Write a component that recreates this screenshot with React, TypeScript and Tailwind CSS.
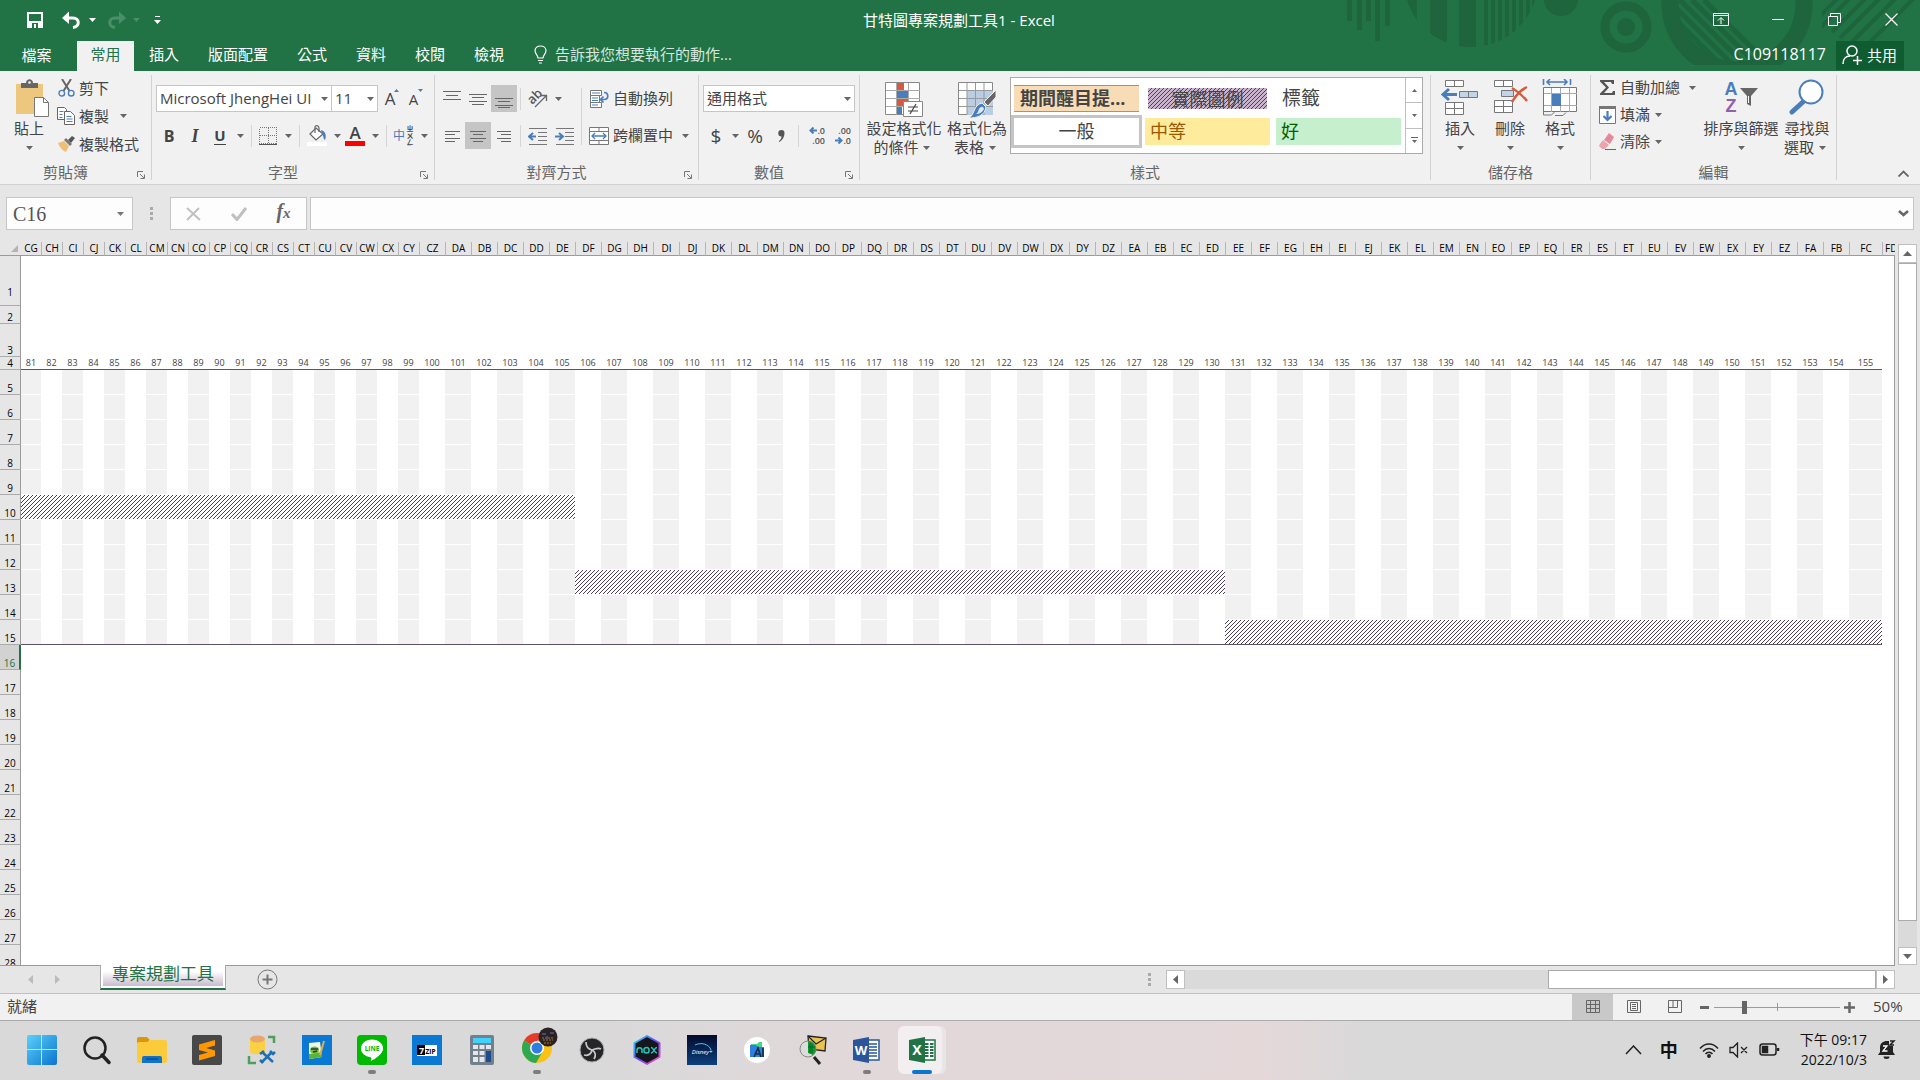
import React from "react";
import type { ReactNode } from "react";

const BLUE = "#4a7ebb";

/* ---------- helpers ---------- */

function Caret({ w = "w-3", color = "#666" }: { w?: string; color?: string }) {
  return (
    <span className={`${w} flex shrink-0 items-center justify-center`}>
      <svg width="7" height="4" viewBox="0 0 7 4">
        <path d="M0 0h7L3.500 4z" fill={color} />
      </svg>
    </span>
  );
}

function Sep({ cls = "mx-[3px] h-[22px]" }: { cls?: string }) {
  return <span className={`${cls} w-px shrink-0 bg-[#d5d5d5]`} />;
}

function IconButton({ label, w, active, children }: { label: string; w: string; active?: boolean; children: ReactNode }) {
  return (
    <button
      aria-label={label}
      className={`${w} flex h-[27px] shrink-0 items-center justify-center ${active ? "bg-[#c5c5c5]" : ""}`}
    >
      {children}
    </button>
  );
}

function BigButton({ w, icon, line1, line2 }: { w: string; icon: ReactNode; line1: string; line2?: string }) {
  return (
    <button className={`${w} flex shrink-0 flex-col items-center pt-2 whitespace-nowrap`}>
      <span className="flex h-10 items-start justify-center">{icon}</span>
      <span className="h-[19px] leading-[19px]">{line1}</span>
      <span className="flex h-[19px] items-center leading-[19px]">
        {line2}
        <Caret w={line2 ? "w-4" : "w-3"} />
      </span>
    </button>
  );
}

function SmallButton({ h, icon, text, caret }: { h: string; icon: ReactNode; text: string; caret?: string }) {
  return (
    <button className={`${h} flex items-center whitespace-nowrap`}>
      <span className="mr-1 flex w-[18px] justify-center">{icon}</span>
      {text}
      {caret && <Caret w={caret} />}
    </button>
  );
}

function Group({ w, label, launcher, children }: { w: string; label: string; launcher?: boolean; children: ReactNode }) {
  return (
    <>
      <section aria-label={label} className={`${w} flex shrink-0 flex-col`}>
        <div className="flex h-[91px]">{children}</div>
        <div className="flex h-[22px] items-center text-[#666]">
          <span className="flex-1 pb-[2px] text-center leading-5">{label}</span>
          {launcher && (
            <button aria-label={`${label}設定`} className="flex w-5 justify-center pt-1">
              <svg width="8" height="8" viewBox="0 0 8 8" fill="none" stroke="#777">
                <path d="M.5 6V.5H6M3 3l4 4M7.500 3.500v4h-4" />
              </svg>
            </button>
          )}
        </div>
      </section>
      <span className="my-1 w-px shrink-0 bg-[#d2d2d2]" />
    </>
  );
}

function Combo({ label, w, value }: { label: string; w: string; value: string }) {
  return (
    <div className={`${w} relative h-[27px] shrink-0`}>
      <select
        aria-label={label}
        defaultValue={value}
        className="h-full w-full appearance-none border border-[#c6c6c6] bg-white pl-[3px] text-[15px] text-[#444]"
      >
        <option>{value}</option>
      </select>
      <span className="pointer-events-none absolute inset-y-0 right-0 flex">
        <Caret w="w-4" />
      </span>
    </div>
  );
}

/* ---------- ribbon icons ---------- */

function LinesIcon({ rows, h = 18 }: { rows: [number, number, number][]; h?: number }) {
  return (
    <svg width="18" height={h} viewBox={`0 0 18 ${h}`} fill="#666" shapeRendering="crispEdges">
      {rows.map(([x, y, w]) => (
        <rect key={y} x={x} y={y} width={w} height="1" />
      ))}
    </svg>
  );
}

const PasteIcon = (
  <svg width="36" height="38" viewBox="0 0 36 38">
    <path d="M2 5h27v30H2z" fill="#eec77f" />
    <path d="M7 9V4h5c0-5 7-5 7 0h5v5z" fill="#666" />
    <circle cx="15.500" cy="3.500" r="1.300" fill="#f1f1f1" />
    <path d="M20.500 18.500h9l5 5v14h-14z" fill="#fff" stroke="#777" />
    <path d="M29.500 18.500v5h5" fill="none" stroke="#777" />
  </svg>
);

const CutIcon = (
  <svg width="17" height="18" viewBox="0 0 17 18" fill="none">
    <path d="M4 0l7.500 12M13 0L5.500 12" stroke="#666" strokeWidth="2" />
    <circle cx="3.800" cy="14.200" r="2.800" stroke={BLUE} strokeWidth="1.400" />
    <circle cx="13.200" cy="14.200" r="2.800" stroke={BLUE} strokeWidth="1.400" />
  </svg>
);

const CopyIcon = (
  <svg width="18" height="18" viewBox="0 0 18 18" fill="#fff" stroke="#666">
    <path d="M.5.5h7l2 2v10h-9z" />
    <path d="M7.500 4.500h6l4 4v9h-10z" />
    <path d="M2.500 4.500h4M2.500 7.500h3M2.500 10.500h3M9.500 9.500h5M9.500 12h6M9.500 14.500h6" stroke={BLUE} />
  </svg>
);

const PainterIcon = (
  <svg width="18" height="16" viewBox="0 0 18 16">
    <path d="M1 7l6-2 5 5-3 6c-3-1-6-4-8-9z" fill="#eec077" />
    <path d="M7 4l2-2 6 6-2 2z" fill="#777" />
    <path d="M11 4l4-4 3 2-4 5z" fill="#555" />
  </svg>
);

const BorderIcon = (
  <svg width="18" height="18" viewBox="0 0 18 18" fill="none" stroke="#777" shapeRendering="crispEdges">
    <path d="M.5.5h17v16H.5zM9 1v15M1 8.500h16" strokeDasharray="1 1" />
    <path d="M0 17.500h18" stroke="#555" />
  </svg>
);

const BucketIcon = (
  <svg width="20" height="21" viewBox="0 0 20 21">
    <path d="M3 9l6-6 7 6-7 6z" fill="#fff" stroke="#666" strokeWidth="1.200" />
    <path d="M8 8V2c0-2 4-2 4 1v4" fill="none" stroke="#666" strokeWidth="1.200" />
    <path d="M14 5c4 1 6 5 4 10-2-1-1-4-3-6z" fill={BLUE} />
    <path d="M0 17h20v4H0z" fill="#fff" />
  </svg>
);

const OrientationIcon = (
  <svg width="20" height="20" viewBox="0 0 20 20">
    <text x="0" y="12" fontSize="13" fontWeight="600" fill="#555" transform="rotate(-45 7 9)">
      ab
    </text>
    <path d="M7 18L18 7M13 6.500h5.500V12" fill="none" stroke="#666" strokeWidth="1.300" />
  </svg>
);

function IndentIcon({ right }: { right?: boolean }) {
  return (
    <svg width="20" height="18" viewBox="0 0 20 18">
      <path d="M1 1.500h18M10 5.500h9M10 9.500h9M10 13.500h9M1 17.500h18" stroke="#777" />
      <path
        d={right ? "M0 9.500h7M4 6l4 3.500L4 13" : "M1 9.500h7M5 6L1 9.500 5 13"}
        stroke={BLUE}
        strokeWidth="2"
        fill="none"
      />
    </svg>
  );
}

const WrapIcon = (
  <svg width="20" height="20" viewBox="0 0 20 20" fill="none">
    <path d="M1.500 1.500h11v5h-11zM1.500 6.500h9v7h-9zM1.500 13.500h11v5h-11z" fill="#fff" stroke="#777" />
    <path d="M3 4h8M3 9h6M3 11.500h6M3 16h6" stroke={BLUE} />
    <path d="M15 3.500c5 0 5 7 0 7h-3M14.500 7.500l-3 3 3 3" stroke={BLUE} strokeWidth="1.700" />
  </svg>
);

const MergeIcon = (
  <svg width="20" height="20" viewBox="0 0 20 20" fill="none">
    <path d="M.5 1.500h19v17H.5zM.5 5.500h19M.5 14.500h19M10 1.500v4M10 14.500v4" fill="#fff" stroke="#777" />
    <path d="M3 10h14M6 7l-3 3 3 3M14 7l3 3-3 3" stroke={BLUE} strokeWidth="1.300" />
  </svg>
);

function DecimalIcon({ less }: { less?: boolean }) {
  const arrow = (
    <svg width="8" height="7" viewBox="0 0 8 7" fill="none" stroke={BLUE} strokeWidth="2">
      <path d={less ? "M0 3.500h6M3.500.5l3 3-3 3" : "M8 3.500H2M4.500.5l-3 3 3 3"} />
    </svg>
  );
  return (
    <span className="flex w-[18px] flex-col text-[9px] leading-[10px] font-semibold text-[#555]">
      <span className="flex items-center justify-end">
        {!less && arrow}
        {less ? ".00" : ".0"}
      </span>
      <span className="flex items-center justify-end">
        {less && arrow}
        {less ? ".0" : ".00"}
      </span>
    </span>
  );
}

const ConditionalIcon = (
  <svg width="38" height="40" viewBox="0 0 38 40">
    <path d="M.5 3.500h34v32H.5z" fill="#fff" stroke="#888" />
    <path d="M11.500 4v32M23.500 4v32M1 11.500h34M1 19.500h34M1 27.500h34" stroke="#aaa" />
    <path d="M12 4h7v7h-7z M12 20h11v7H12z" fill="#d65b3d" />
    <path d="M12 12h11v7H12z M12 28h5v7h-5z" fill={BLUE} />
    <path d="M18.500 22.500h19v15h-19z" fill="#fff" stroke="#888" />
    <path d="M23 28h10M23 32h10M31 25l-6 10" stroke="#444" strokeWidth="1.200" />
  </svg>
);

const TableStyleIcon = (
  <svg width="38" height="40" viewBox="0 0 38 40">
    <path d="M.5 3.500h34v32H.5z" fill="#fff" stroke="#888" />
    <path d="M9 11h26v25H9z" fill="#b9cde5" />
    <path d="M9 4v32M17.500 4v32M26 4v32M1 11.500h34M1 19.500h34M1 27.500h34" stroke="#999" />
    <path d="M38 11v7l-8 9-4-4z" fill="#666" stroke="#f1f1f1" />
    <path d="M24 24l4 4c-1 9-10 11-17 11 6-3 4-13 13-15z" fill={BLUE} stroke="#f1f1f1" />
    <path d="M21 30c2-3 4-3 5 0-2 4-5 5-8 5 2-1 2-3 3-5z" fill="#dfe9f5" />
  </svg>
);

const InsertIcon = (
  <svg width="38" height="37" viewBox="0 0 38 37" fill="#fff" stroke="#777">
    <path d="M4.500 1.500h18v6h-18zM13.500 1.500v6M4.500 23.500h18v12h-18zM13.500 23.500v12M4.500 29.500h18" />
    <path d="M18.500 12.500h18v6h-18zM27.500 12.500v6" fill="#c3d3e8" />
    <path d="M2 15.500h14M8 10l-6 5.500L8 21" fill="none" stroke={BLUE} strokeWidth="3" />
  </svg>
);

const DeleteIcon = (
  <svg width="38" height="37" viewBox="0 0 38 37" fill="#fff" stroke="#777">
    <path d="M3.500 1.500h18v6h-18zM12.500 1.500v6M3.500 21.500h18v12h-18zM12.500 21.500v12M3.500 27.500h18" />
    <path d="M10.500 11.500h12v6h-12z" fill="#c3d3e8" />
    <path d="M21 9c5 3 11 8 15 13M36 8c-6 3-11 8-15 15" fill="none" stroke="#d65b3d" strokeWidth="2.500" />
  </svg>
);

const FormatIcon = (
  <svg width="36" height="38" viewBox="0 0 36 38" fill="none">
    <path d="M1.500 0v6M28.500 0v6M5 3h20M8 0L5 3l3 3M22 0l3 3-3 3" stroke={BLUE} strokeWidth="1.600" />
    <path d="M1.500 8.500h33v24h-33z" fill="#fff" stroke="#777" />
    <path d="M9.500 9v24M18.500 9v24M27.500 9v24M2 14.500h33M2 26.500h33" stroke="#aaa" />
    <path d="M10 15h9v12h-9z" fill={BLUE} />
    <path d="M1.500 32v4h8l3-3M13 36.500h8l3-3" stroke="#777" />
  </svg>
);

const SumIcon = (
  <svg width="17" height="17" viewBox="0 0 17 17">
    <path d="M1 1h14v4h-2l-1-2H5l5 5.500L5 14h8l1-2h2v4H1v-1.500L7 8.500 1 2.500z" fill="#555" />
  </svg>
);

const FillIcon = (
  <svg width="17" height="18" viewBox="0 0 17 18">
    <path d="M.5.500h16v17H.5z" fill="#fff" stroke="#777" />
    <path d="M0 0h17v3H0z" fill="#777" />
    <path d="M8.500 5v9M4.500 10l4 4 4-4" stroke={BLUE} strokeWidth="2.200" fill="none" />
  </svg>
);

const EraserIcon = (
  <svg width="18" height="17" viewBox="0 0 18 17">
    <path d="M11 0l5 4-4 7-6-4z" fill="#e58a9a" />
    <path d="M5 7l6 5-4 4H4l-3-3c0-1 2-4 4-6z" fill="#eba3af" />
    <path d="M7 16.500h11" stroke="#666" />
  </svg>
);

const SortIcon = (
  <span className="flex w-9 font-['Liberation_Sans'] text-[18px] leading-[17px] font-bold">
    <span className="flex w-4 flex-col items-center pt-[2px]">
      <span className="text-[#4a7ebb]">A</span>
      <span className="text-[#9160ad]">Z</span>
    </span>
    <svg width="20" height="37" viewBox="0 0 20 37">
      <path d="M1 9h18l-7 8v10l-4-2v-8z" fill="#666" />
      <path d="M9.500 17v7" stroke="#fff" />
    </svg>
  </span>
);

const FindIcon = (
  <svg width="36" height="37" viewBox="0 0 36 37">
    <path d="M3 33l12-11" stroke={BLUE} strokeWidth="5" strokeLinecap="round" />
    <circle cx="22" cy="13" r="11.500" fill="#fff" stroke={BLUE} strokeWidth="2" />
  </svg>
);

/* ---------- title bar ---------- */

function TitleArt() {
  const thin = [1484, 1491, 1498, 1505, 1512, 1519, 1526, 1532];
  return (
    <svg className="pointer-events-none absolute top-0 right-0" width="620" height="71" viewBox="1300 0 620 71" fill="#1e643c">
      <defs>
        <clipPath id="disc">
          <circle cx="1471" cy="-20" r="67" />
        </clipPath>
        <clipPath id="bowl">
          <circle cx="1737" cy="3" r="60" />
        </clipPath>
        <clipPath id="band">
          <rect x="1650" y="0" width="170" height="65" />
        </clipPath>
        <clipPath id="corner">
          <rect x="1822" y="0" width="98" height="56" />
        </clipPath>
      </defs>
      <path d="M1347 0h5v21h-5zM1357 0h5v30h-5zM1366 0h5v21h-5zM1375 0h5v41h-5zM1385 0h5v26h-5z" />
      <g clipPath="url(#disc)">
        <path d="M1404 0h13v50h-13zM1430 0h17v50h-17zM1459 0h17v50h-17z" />
        {thin.map((x) => (
          <rect key={x} x={x} y="0" width="4" height="50" />
        ))}
      </g>
      <circle cx="1561" cy="-1" r="17" />
      <circle cx="1626" cy="27" r="9" />
      <circle cx="1626" cy="27" r="21" fill="none" stroke="#1e643c" strokeWidth="9" />
      <g clipPath="url(#band)">
        <circle cx="1737" cy="3" r="67" fill="none" stroke="#1e643c" strokeWidth="17" />
      </g>
      <g clipPath="url(#bowl)" stroke="#1e643c" strokeWidth="5">
        <path d="M1668 0l80 80M1680 0l80 80M1692 0l80 80M1704 0l80 80M1660 4l80 80" />
      </g>
      <g clipPath="url(#corner)" stroke="#1e643c" strokeWidth="4">
        <path d="M1842-6l-24 24M1856-8l-38 38M1872-8l-40 40M1886-8l-46 46M1904-10l-66 66M1922-10l-70 70" />
      </g>
    </svg>
  );
}

function TitleBar() {
  return (
    <div className="relative z-10 flex h-[41px] items-center pb-[2px] text-white">
      <div className="flex flex-1 items-center pl-[26px]">
        <button aria-label="儲存">
          <svg width="18" height="18" viewBox="0 0 18 18">
            <path d="M2 2h14v14H2z" fill="none" stroke="#fff" strokeWidth="2" />
            <path d="M3 10h12v6H3z" fill="#fff" />
            <path d="M6 12h6v5H6z" fill="#217346" />
            <path d="M8 13h2v4H8z" fill="#fff" />
          </svg>
        </button>
        <button aria-label="復原" className="ml-[18px] flex items-center">
          <svg width="20" height="18" viewBox="0 0 20 18">
            <path d="M3 7h8c7 0 7 9 0 9.500" fill="none" stroke="#fff" strokeWidth="3" />
            <path d="M0 7l7-6.500V13z" fill="#fff" />
          </svg>
          <Caret w="w-5" color="#fff" />
        </button>
        <button aria-label="取消復原" className="ml-1 flex items-center">
          <svg width="20" height="18" viewBox="0 0 20 18">
            <path d="M17 7H9c-7 0-7 9 0 9.500" fill="none" stroke="#4a8f6a" strokeWidth="3" />
            <path d="M20 7l-7-6.500V13z" fill="#4a8f6a" />
          </svg>
          <Caret w="w-5" color="#4a8f6a" />
        </button>
        <button aria-label="自訂快速存取工具列" className="ml-2">
          <svg width="7" height="8" viewBox="0 0 7 8" fill="#fff">
            <path d="M1 0h5v1H1zM0 4h7L3.500 8z" />
          </svg>
        </button>
      </div>
      <h1 className="mr-7 text-[15px] leading-5 text-white">甘特圖專案規劃工具1 - Excel</h1>
      <div className="flex h-full flex-1 justify-end">
        <button aria-label="功能區顯示選項" className="flex w-[57px] items-center justify-center">
          <svg width="16" height="13" viewBox="0 0 16 13" fill="none" stroke="#fff">
            <path d="M.5.5h15v12H.5zM.5 2.500h15M8 11V5M5 7.500L8 4.500l3 3" />
          </svg>
        </button>
        <button aria-label="最小化" className="flex w-[57px] items-center justify-center">
          <svg width="12" height="2" viewBox="0 0 12 2">
            <path d="M0 0h12v1H0z" fill="#fff" />
          </svg>
        </button>
        <button aria-label="還原" className="flex w-[57px] items-center justify-center">
          <svg width="13" height="13" viewBox="0 0 13 13" fill="none" stroke="#fff">
            <path d="M.5 3.500h9v9h-9zM2.500 3.500v-3h10v9h-3" />
          </svg>
        </button>
        <button aria-label="關閉" className="flex w-[57px] items-center justify-center">
          <svg width="13" height="13" viewBox="0 0 13 13" fill="none" stroke="#fff" strokeWidth="1.200">
            <path d="M.5.5l12 12M12.500.5l-12 12" />
          </svg>
        </button>
      </div>
    </div>
  );
}

function Tabs() {
  const tabs = ["插入", "版面配置", "公式", "資料", "校閱", "檢視"];
  return (
    <nav className="relative z-10 flex h-[30px] text-[15px] leading-6 text-white">
      <button className="w-[77px] pr-1 pb-[2px] text-center">檔案</button>
      <button className="w-[57px] bg-[#f1f1f1] pb-1 text-center text-[#217346]">常用</button>
      <div className="ml-[1px] flex gap-px">
        {tabs.map((t) => (
          <button key={t} className="px-[14px] pb-1">
            {t}
          </button>
        ))}
      </div>
      <button className="ml-[16px] flex items-center gap-2 pb-1 text-[#d5e6dc]">
        <svg width="13" height="19" viewBox="0 0 13 19" fill="none" stroke="#fff" strokeWidth="1.200">
          <path d="M4 13c0-3-3-4-3-7.500C1-.5 12-.5 12 5.500c0 3.500-3 4.500-3 7.500zM4 15.500h5M5 18h3" />
        </svg>
        告訴我您想要執行的動作...
      </button>
      <div className="ml-auto mr-4 flex items-start">
        <span className="mr-[10px] text-[16px] leading-[26px]">C109118117</span>
        <button className="flex h-[29px] w-[68px] items-center gap-1 bg-[#0e5c2f] pb-[2px] pl-[6px]">
          <svg width="21" height="20" viewBox="0 0 21 20" fill="none" stroke="#fff" strokeWidth="1.500">
            <circle cx="10" cy="6" r="5" />
            <path d="M1 19c0-5 3-8 7-8M15.500 11v9M11 15.500h9" />
          </svg>
          共用
        </button>
      </div>
    </nav>
  );
}

/* ---------- ribbon ---------- */

function Ribbon() {
  return (
    <div className="flex h-[114px] border-b border-[#d2d2d2] bg-[#f1f1f1] text-[15px] text-[#444]">
      <Group w="w-[151px]" label="剪貼簿" launcher>
        <div className="ml-[5px]">
          <BigButton w="w-[48px]" icon={<span className="ml-[6px]">{PasteIcon}</span>} line1="貼上" />
        </div>
        <div className="ml-1 flex flex-col items-start pt-[3px]">
          <SmallButton h="h-7" icon={CutIcon} text="剪下" />
          <SmallButton h="h-7" icon={CopyIcon} text="複製" caret="w-7" />
          <SmallButton h="h-7" icon={PainterIcon} text="複製格式" />
        </div>
      </Group>

      <Group w="w-[282px]" label="字型" launcher>
        <div className="flex flex-col gap-[10px] pt-[14px] pl-1">
          <div className="flex items-center">
            <Combo label="字型名稱" w="w-[176px]" value="Microsoft JhengHei UI" />
            <Combo label="字型大小" w="-ml-px w-[47px]" value="11" />
            <IconButton label="放大字型" w="ml-[2px] w-6">
              <span className="text-[17px] leading-6">A</span>
              <svg className="mb-4 -ml-px" width="5" height="3" viewBox="0 0 5 3">
                <path d="M0 3l2.500-3L5 3z" fill={BLUE} />
              </svg>
            </IconButton>
            <IconButton label="縮小字型" w="w-6">
              <span className="text-[15px] leading-6">A</span>
              <svg className="mb-4" width="5" height="3" viewBox="0 0 5 3">
                <path d="M0 0h5L2.500 3z" fill={BLUE} />
              </svg>
            </IconButton>
          </div>
          <div className="flex items-center">
            <IconButton label="粗體" w="w-[26px]">
              <span className="text-[16px] leading-5 font-bold">B</span>
            </IconButton>
            <IconButton label="斜體" w="w-[26px]">
              <span className="font-['Liberation_Serif'] text-[18px] leading-5 font-bold italic">I</span>
            </IconButton>
            <IconButton label="底線" w="w-6">
              <span className="border-b border-[#444] text-[15px] leading-[17px] font-bold">U</span>
            </IconButton>
            <Caret w="w-4" />
            <Sep />
            <IconButton label="框線" w="w-[25px]">{BorderIcon}</IconButton>
            <Caret w="w-4" />
            <Sep />
            <IconButton label="填滿色彩" w="w-[28px]">{BucketIcon}</IconButton>
            <Caret w="w-3" />
            <IconButton label="字型色彩" w="w-6">
              <span className="border-b-[5px] border-[#f00] px-1 text-[17px] leading-[16px] font-semibold">A</span>
            </IconButton>
            <Caret w="w-4" />
            <Sep />
            <IconButton label="顯示注音" w="w-[26px]">
              <span className="text-[12px] leading-4 text-[#4a7ebb]">中</span>
              <span className="text-[7px] leading-[8px] font-bold [writing-mode:vertical-rl]">ㄓㄨㄥ</span>
            </IconButton>
            <Caret w="w-4" />
          </div>
        </div>
      </Group>

      <Group w="w-[263px]" label="對齊方式" launcher>
        <div className="flex flex-col gap-[10px] pt-[14px] pl-1">
          <div className="flex items-center">
            <IconButton label="靠上對齊" w="w-[26px]">
              <LinesIcon rows={[[0, 1, 18], [3, 5, 12], [0, 9, 18]]} />
            </IconButton>
            <IconButton label="置中對齊" w="w-[26px]">
              <LinesIcon rows={[[0, 4, 18], [3, 7, 12], [0, 11, 18], [3, 14, 12]]} />
            </IconButton>
            <IconButton label="靠下對齊" w="w-[26px]" active>
              <LinesIcon rows={[[0, 8, 18], [3, 11, 12], [0, 15, 18], [3, 17, 12]]} />
            </IconButton>
            <Sep />
            <IconButton label="方向" w="w-[28px]">{OrientationIcon}</IconButton>
            <Caret />
          </div>
          <div className="flex items-center">
            <IconButton label="靠左對齊" w="w-[26px]">
              <LinesIcon rows={[[2, 4, 15], [2, 7, 10], [2, 11, 15], [2, 14, 10]]} />
            </IconButton>
            <IconButton label="置中" w="w-[26px]" active>
              <LinesIcon rows={[[1, 4, 16], [4, 7, 10], [1, 11, 16], [4, 14, 10]]} />
            </IconButton>
            <IconButton label="靠右對齊" w="w-[26px]">
              <LinesIcon rows={[[2, 4, 14], [6, 7, 10], [2, 11, 14], [6, 14, 10]]} />
            </IconButton>
            <Sep />
            <IconButton label="減少縮排" w="w-[28px]">
              <IndentIcon />
            </IconButton>
            <IconButton label="增加縮排" w="w-[26px]">
              <IndentIcon right />
            </IconButton>
          </div>
        </div>
        <Sep cls="mx-[3px] mt-[17px] h-[57px]" />
        <div className="flex flex-col items-start gap-[10px] pt-[14px] pl-1 whitespace-nowrap">
          <button className="flex h-[27px] items-center gap-1">{WrapIcon}自動換列</button>
          <button className="flex h-[27px] items-center gap-1">
            {MergeIcon}跨欄置中
            <Caret w="w-4" />
          </button>
        </div>
      </Group>

      <Group w="w-[160px]" label="數值" launcher>
        <div className="flex flex-col gap-[10px] pt-[14px] pl-1">
          <Combo label="數值格式" w="w-[152px]" value="通用格式" />
          <div className="flex items-center">
            <IconButton label="會計數字格式" w="w-[26px]">
              <span className="text-[19px] leading-6">$</span>
            </IconButton>
            <Caret />
            <IconButton label="百分比樣式" w="w-[28px]">
              <span className="text-[19px] leading-6">%</span>
            </IconButton>
            <IconButton label="千分位樣式" w="w-6">
              <svg width="7" height="12" viewBox="0 0 7 12">
                <path d="M3.500 0a3 3 0 0 1 3 3c0 4-2 7-5 9l-.7-.8C3 9.500 3.500 8 3.500 6.500a3 3 0 0 1 0-6.500z" fill="#555" />
              </svg>
            </IconButton>
            <Sep cls="mx-[5px] h-[22px]" />
            <IconButton label="增加小數位數" w="w-6">
              <DecimalIcon />
            </IconButton>
            <IconButton label="減少小數位數" w="w-[28px]">
              <DecimalIcon less />
            </IconButton>
          </div>
        </div>
      </Group>

      <Group w="w-[570px]" label="樣式">
        <div className="ml-1 flex">
          <BigButton w="w-20" icon={ConditionalIcon} line1="設定格式化" line2="的條件" />
          <BigButton w="w-[66px]" icon={TableStyleIcon} line1="格式化為" line2="表格" />
        </div>
        <div className="mt-[6px] flex h-[77px] w-[413px] border border-[#ababab] bg-white">
          <div className="mt-1 grid h-[66px] w-[393px] grid-cols-3 grid-rows-2 text-[18px] leading-6">
            <button className="m-[3px] border-y border-[#c98f35] bg-[#f7dcb5] pb-[2px] pl-[6px] text-left font-bold">
              期間醒目提...
            </button>
            <button className="relative m-[6px] bg-[#c9b3cc] leading-[20px]">
              <Hatch id="legend" color="#54405c" cls="absolute inset-0 h-full w-full" />
              <span className="relative">實際圖例</span>
            </button>
            <button className="m-[3px] pb-[2px] pl-[6px] text-left text-[19px]">標籤</button>
            <button className="border-[3px] border-[#c5c5c5] pb-[2px]">一般</button>
            <button className="m-[3px] bg-[#ffeb9c] pb-[2px] pl-[5px] text-left text-[#9c5700]">中等</button>
            <button className="m-[3px] bg-[#c6efce] pb-[2px] pl-[5px] text-left text-[#006100]">好</button>
          </div>
          <div className="ml-auto flex w-[17px] flex-col divide-y divide-[#c0c0c0] border-l border-[#c0c0c0]">
            <button aria-label="上一列樣式" className="flex flex-1 items-center justify-center">
              <svg width="5" height="3" viewBox="0 0 5 3"><path d="M0 3h5L2.500 0z" fill="#666" /></svg>
            </button>
            <button aria-label="下一列樣式" className="flex flex-1 items-center justify-center">
              <svg width="5" height="3" viewBox="0 0 5 3"><path d="M0 0h5L2.500 3z" fill="#666" /></svg>
            </button>
            <button aria-label="其他樣式" className="flex flex-1 items-center justify-center">
              <svg width="7" height="7" viewBox="0 0 7 7" fill="#666"><path d="M0 0h7v1H0zM1 3h5L3.500 6z" /></svg>
            </button>
          </div>
        </div>
      </Group>

      <Group w="w-[159px]" label="儲存格">
        <div className="ml-1 flex">
          <BigButton w="w-[50px]" icon={InsertIcon} line1="插入" />
          <BigButton w="w-[50px]" icon={DeleteIcon} line1="刪除" />
          <BigButton w="w-[50px]" icon={FormatIcon} line1="格式" />
        </div>
      </Group>

      <Group w="w-[245px]" label="編輯">
        <div className="ml-[7px] flex w-[103px] flex-col items-start pt-[3px]">
          <SmallButton h="h-[27px]" icon={SumIcon} text="自動加總" caret="w-6" />
          <SmallButton h="h-[27px]" icon={FillIcon} text="填滿" caret="w-4" />
          <SmallButton h="h-[27px]" icon={EraserIcon} text="清除" caret="w-4" />
        </div>
        <BigButton w="w-20" icon={SortIcon} line1="排序與篩選" />
        <BigButton w="w-[52px]" icon={FindIcon} line1="尋找與" line2="選取" />
      </Group>

      <button aria-label="摺疊功能區" className="mr-[11px] mb-[7px] ml-auto self-end">
        <svg width="11" height="7" viewBox="0 0 11 7" fill="none" stroke="#666" strokeWidth="1.800">
          <path d="M.5 6.500l5-5 5 5" />
        </svg>
      </button>
    </div>
  );
}

/* ---------- formula bar ---------- */

function FormulaBar() {
  return (
    <div className="flex h-[57px] items-start bg-[#e6e6e6] pt-3 pr-[6px] pl-[6px]">
      <div className="flex h-[33px] w-[127px] items-center border border-[#c6c6c6] bg-[#fdfdfd]">
        <input
          aria-label="名稱方塊"
          defaultValue="C16"
          className="w-[103px] bg-transparent pl-[6px] font-['Liberation_Serif'] text-[20px] leading-6 text-[#555] outline-none"
        />
        <button aria-label="名稱清單">
          <Caret w="w-5" color="#777" />
        </button>
      </div>
      <svg className="mx-[16px] mt-[10px] shrink-0" width="5" height="14" viewBox="0 0 5 14" fill="#aaa">
        <path d="M1 0h3v3H1zM1 5h3v3H1zM1 10h3v3H1z" />
      </svg>
      <div className="flex h-[33px] w-[137px] shrink-0 items-center border border-[#c6c6c6] bg-[#fdfdfd]">
        <button aria-label="取消" className="flex w-[45px] justify-center">
          <svg width="15" height="14" viewBox="0 0 15 14" stroke="#c0c0c0" strokeWidth="2">
            <path d="M1 1l13 12M13 1L1 13" />
          </svg>
        </button>
        <button aria-label="輸入" className="flex w-[45px] justify-center">
          <svg width="16" height="14" viewBox="0 0 16 14" fill="none" stroke="#c0c0c0" strokeWidth="3">
            <path d="M1 7l5 5.500L15 1" />
          </svg>
        </button>
        <button
          aria-label="插入函數"
          className="w-[45px] pb-[3px] text-center font-['Liberation_Serif'] text-[20px] leading-6 font-bold text-[#666] italic"
        >
          f<span className="text-[15px]">x</span>
        </button>
      </div>
      <div className="ml-[3px] flex h-[33px] flex-1 items-center border border-[#c6c6c6] bg-[#fdfdfd]">
        <input aria-label="資料編輯列" className="h-full flex-1 bg-transparent px-2 outline-none" />
        <button aria-label="展開資料編輯列" className="mr-1">
          <svg width="11" height="7" viewBox="0 0 11 7" fill="none" stroke="#666" strokeWidth="2.500">
            <path d="M1 1l4.500 4L10 1" />
          </svg>
        </button>
      </div>
    </div>
  );
}

/* ---------- worksheet ---------- */

function Hatch({ id, color, cls }: { id: string; color: string; cls: string }) {
  return (
    <svg className={cls} shapeRendering="crispEdges">
      <defs>
        <pattern id={id} width="4" height="4" patternUnits="userSpaceOnUse">
          <path d="M3 0h1v1h-1zM2 1h1v1h-1zM1 2h1v1h-1zM0 3h1v1h-1z" fill={color} />
        </pattern>
      </defs>
      <rect width="100%" height="100%" fill={`url(#${id})`} />
    </svg>
  );
}

const FIRST_COL = 85;
const COL_COUNT = 75;
const FIRST_PERIOD = 81;

function colName(n: number) {
  return String.fromCharCode(64 + Math.floor((n - 1) / 26)) + String.fromCharCode(65 + ((n - 1) % 26));
}

const columns = Array.from({ length: COL_COUNT }, (_, i) => ({
  name: colName(FIRST_COL + i),
  period: FIRST_PERIOD + i,
  width: i === 0 ? "w-[20px]" : i < 19 ? "w-[21px]" : i === COL_COUNT - 1 ? "w-[33px]" : "w-[26px]",
}));

const bars: Record<number, [number, number]> = {
  10: [81, 105],
  13: [106, 130],
  15: [131, 155],
};

const rowHeights: Record<number, string> = { 1: "h-[50px]", 2: "h-[18px]", 3: "h-[33px]", 4: "h-[13px]" };

function GridRow({ row }: { row: number }) {
  const h = rowHeights[row] ?? "h-[25px]";
  const selected = row === 16;
  const bar = bars[row];
  const inChart = row >= 5 && row <= 15;
  const line = row === 15 ? "border-[#5f5363]" : "border-white";
  return (
    <tr className={h}>
      <th
        scope="row"
        className={`border-b border-b-[#ababab] p-0 text-center align-bottom text-[10px] leading-[12px] font-normal ${
          row === 1 ? "pb-[7px]" : ""
        } ${
          selected
            ? "border-r-2 border-r-[#217346] bg-[#d2d2d2] text-[#217346]"
            : "border-r border-r-[#9b9b9b] bg-[#e6e6e6] text-black"
        }`}
      >
        {row}
      </th>
      {row === 4 &&
        columns.map((c) => (
          <td
            key={c.name}
            className="border-b border-[#5f5363] p-0 text-center text-[9px] leading-[12px] text-[#444]"
          >
            {c.period}
          </td>
        ))}
      {inChart &&
        columns.map((c) => {
          if (bar && c.period > bar[0] && c.period <= bar[1]) return null;
          if (bar && c.period === bar[0]) {
            return (
              <td key={c.name} colSpan={bar[1] - bar[0] + 1} className={`border-b p-0 ${line}`}>
                <Hatch id={`bar${row}`} color="#4c3f50" cls="block h-6 w-full" />
              </td>
            );
          }
          return <td key={c.name} className={`border-b p-0 ${line} ${c.period % 2 ? "bg-[#f1f1f1]" : ""}`} />;
        })}
      {row !== 4 && !inChart && <td colSpan={COL_COUNT} className="p-0" />}
      <td className="border-r border-[#9b9b9b] p-0" />
    </tr>
  );
}

function Sheet() {
  const rows = Array.from({ length: 28 }, (_, i) => i + 1);
  return (
    <div className="flex min-h-0 flex-1 bg-[#e6e6e6]">
      <div className="min-w-0 flex-1 overflow-hidden">
        <table className="w-full table-fixed border-separate border-spacing-0 bg-white font-['Open_Sans']">
          <colgroup>
            <col className="w-[21px]" />
            {columns.map((c) => (
              <col key={c.name} className={c.width} />
            ))}
            <col />
          </colgroup>
          <thead>
            <tr className="h-[14px] bg-[#e6e6e6]">
              <th aria-label="全選" className="border-b border-[#9b9b9b] p-0">
                <svg className="ml-[11px]" width="7" height="7" viewBox="0 0 7 7">
                  <path d="M7 0v7H0z" fill="#b4b4b4" />
                </svg>
              </th>
              {columns.map((c, i) => (
                <th
                  key={c.name}
                  scope="col"
                  className={`border-b border-b-[#9b9b9b] p-0 text-center text-[10px] leading-[13px] font-normal text-black ${
                    i ? "border-l border-l-[#b5b5b5]" : ""
                  }`}
                >
                  {c.name}
                </th>
              ))}
              <th
                scope="col"
                className="overflow-hidden border-b border-l border-b-[#9b9b9b] border-l-[#b5b5b5] p-0 pl-[2px] text-left text-[10px] leading-[13px] font-normal text-black"
              >
                FD
              </th>
            </tr>
          </thead>
          <tbody>
            {rows.map((r) => (
              <GridRow key={r} row={r} />
            ))}
          </tbody>
        </table>
      </div>
      <div className="mx-[3px] mt-[2px] flex w-[19px] flex-col bg-[#dadada]">
        <button aria-label="向上捲動" className="flex h-[19px] items-center justify-center border border-[#c0c0c0] bg-white">
          <svg width="9" height="5" viewBox="0 0 9 5"><path d="M0 5h9L4.500 0z" fill="#666" /></svg>
        </button>
        <div className="flex-1 border border-[#ababab] bg-white" />
        <button
          aria-label="向下捲動"
          className="mt-[26px] flex h-[18px] items-center justify-center border border-[#c0c0c0] bg-white"
        >
          <svg width="9" height="5" viewBox="0 0 9 5"><path d="M0 0h9L4.500 5z" fill="#666" /></svg>
        </button>
      </div>
    </div>
  );
}

function SheetTabs() {
  return (
    <div className="flex h-[28px] items-start bg-[#e6e6e6]">
      <div className="flex h-full flex-1 items-start border-t border-[#9b9b9b]">
        <div className="flex w-[100px] pt-[9px] pl-[28px]">
          <button aria-label="上一個工作表" className="w-[27px]">
            <svg width="6" height="9" viewBox="0 0 6 9"><path d="M5 0v9L0 4.500z" fill="#bbb" /></svg>
          </button>
          <button aria-label="下一個工作表">
            <svg width="6" height="9" viewBox="0 0 6 9"><path d="M0 0v9l5-4.500z" fill="#bbb" /></svg>
          </button>
        </div>
        <button className="-mt-px h-[25px] w-[126px] border-x border-b-2 border-x-[#ababab] border-b-[#217346] bg-white px-[2px] pb-[2px]">
          <span className="block h-[21px] bg-linear-to-b from-white from-30% to-[#c9bccd] text-[17px] leading-[18px] text-[#217346]">
            專案規劃工具
          </span>
        </button>
        <button aria-label="新工作表" className="mt-[3px] ml-[31px]">
          <svg width="21" height="21" viewBox="0 0 21 21" fill="none" stroke="#777">
            <circle cx="10.500" cy="10.500" r="9.500" />
            <path d="M10.500 5.500v10M5.500 10.500h10" strokeWidth="2" />
          </svg>
        </button>
        <svg className="mt-[7px] mr-[14px] ml-auto" width="5" height="14" viewBox="0 0 5 14" fill="#aaa">
          <path d="M1 0h3v3H1zM1 5h3v3H1zM1 10h3v3H1z" />
        </svg>
        <div className="mt-1 flex h-[19px] w-5/13 bg-[#dadada]">
          <button aria-label="向左捲動" className="flex w-[19px] items-center justify-center border border-[#c0c0c0] bg-white">
            <svg width="5" height="9" viewBox="0 0 5 9"><path d="M5 0v9L0 4.500z" fill="#666" /></svg>
          </button>
          <div className="ml-auto w-[45%] border border-[#ababab] bg-white" />
          <button aria-label="向右捲動" className="flex w-[19px] items-center justify-center border border-[#c0c0c0] bg-white">
            <svg width="5" height="9" viewBox="0 0 5 9"><path d="M0 0v9l5-4.500z" fill="#666" /></svg>
          </button>
        </div>
      </div>
      <div className="w-[25px] shrink-0" />
    </div>
  );
}

function StatusBar() {
  return (
    <footer className="flex h-[28px] items-center border-y border-t-[#c0c0c0] border-b-[#ababab] bg-[#f1f1f1] pr-4 pl-[7px] text-[15px] leading-6 text-[#444]">
      <span className="pb-[3px]">就緒</span>
      <div className="ml-auto flex h-full">
        <button aria-label="標準模式" className="flex w-[41px] items-center justify-center bg-[#c8c8c8] pb-px">
          <svg width="14" height="13" viewBox="0 0 14 13" fill="none" stroke="#666">
            <path d="M.5.5h13v12H.5zM4.500.5v12M9.500.5v12M.5 4.500h13M.5 8.500h13" />
          </svg>
        </button>
        <button aria-label="整頁模式" className="flex w-[41px] items-center justify-center pb-px">
          <svg width="14" height="13" viewBox="0 0 14 13" fill="none" stroke="#666">
            <path d="M.5.5h13v12H.5zM3.500 2.500h7v8h-7zM5 4.500h4M5 6.500h4M5 8.500h4" />
          </svg>
        </button>
        <button aria-label="分頁預覽" className="flex w-[41px] items-center justify-center pb-px">
          <svg width="14" height="13" viewBox="0 0 14 13" fill="none" stroke="#666">
            <path d="M.5.5h13v12H.5zM5 .5v7M9.500.5v7M.5 7.500h9" />
          </svg>
        </button>
      </div>
      <button aria-label="縮小" className="ml-px flex w-[18px] justify-start pl-1">
        <span className="h-[3px] w-[9px] bg-[#666]" />
      </button>
      <div className="relative flex h-4 w-[126px] items-center">
        <input
          type="range"
          aria-label="顯示比例"
          min="0"
          max="100"
          defaultValue="23"
          className="h-px w-full appearance-none bg-[#9b9b9b] [&::-webkit-slider-thumb]:h-[13px] [&::-webkit-slider-thumb]:w-[5px] [&::-webkit-slider-thumb]:appearance-none [&::-webkit-slider-thumb]:bg-[#666]"
        />
        <span className="pointer-events-none absolute top-1 left-1/2 h-2 w-px bg-[#9b9b9b]" />
      </div>
      <button aria-label="放大" className="mr-[18px] ml-1">
        <svg width="11" height="11" viewBox="0 0 11 11"><path d="M5.500 0v11M0 5.500h11" stroke="#666" strokeWidth="2.500" /></svg>
      </button>
      <span className="w-[31px] pb-[3px] text-[15px]">50%</span>
    </footer>
  );
}

/* ---------- taskbar ---------- */

const apps: { name: string; state?: "open" | "active"; icon: ReactNode }[] = [
  {
    name: "開始",
    icon: (
      <svg width="30" height="30" viewBox="0 0 30 30">
        <defs>
          <linearGradient id="win" x1="0" y1="0" x2="1" y2="1">
            <stop offset="0" stopColor="#5bd0fb" />
            <stop offset="1" stopColor="#0a74cf" />
          </linearGradient>
        </defs>
        <path d="M2 0h12v14H0V2q0-2 2-2zM15 0h13q2 0 2 2v12H15zM0 15h14v15H2q-2 0-2-2zM15 15h15v13q0 2-2 2H15z" fill="url(#win)" />
      </svg>
    ),
  },
  {
    name: "搜尋",
    icon: (
      <svg width="30" height="30" viewBox="0 0 30 30" fill="none" stroke="#222">
        <circle cx="13" cy="13" r="10.500" strokeWidth="2.500" />
        <path d="M20 20l7 7.500" strokeWidth="3.500" strokeLinecap="round" />
      </svg>
    ),
  },
  {
    name: "檔案總管",
    icon: (
      <svg width="30" height="30" viewBox="0 0 30 30">
        <path d="M0 4q0-2 2-2h8l3 3h-1v5H0z" fill="#d9970f" />
        <path d="M2 7h8l3-2h15q2 0 2 2v19q0 2-2 2H2q-2 0-2-2V9q0-2 2-2z" fill="#fccb3c" />
        <path d="M5 28v-5q0-2 2-2h16q2 0 2 2v5z" fill="#1272c8" />
        <path d="M9 24h12" stroke="#0b4f93" strokeWidth="1.500" />
      </svg>
    ),
  },
  {
    name: "Sublime Text",
    icon: (
      <svg width="30" height="30" viewBox="0 0 30 30">
        <rect width="30" height="30" rx="2" fill="#484848" />
        <path d="M7 9.500L23 5v5.500l-9 2.500 9 2.500V21L7 25.500V20l9-2.500-9-2.500z" fill="#ff9800" />
      </svg>
    ),
  },
  {
    name: "SQL 工具",
    icon: (
      <svg width="30" height="30" viewBox="0 0 30 30">
        <path d="M3 4h15v13c0 3-15 3-15 0z" fill="#fbd044" />
        <ellipse cx="10.500" cy="4" rx="7.500" ry="3.500" fill="#e6a66e" />
        <path d="M21 2h6v6M2 21v7h7" fill="none" stroke="#4f9e5b" strokeWidth="2.500" />
        <path d="M15 17l11 10M25 17L15 27" stroke="#1f6fb5" strokeWidth="2.500" />
        <path d="M13 19l4-3M23 16l3 3 2-2M13 25l3 3" stroke="#1f6fb5" strokeWidth="2.500" fill="none" />
      </svg>
    ),
  },
  {
    name: "Notepad++",
    icon: (
      <svg width="30" height="30" viewBox="0 0 30 30">
        <path d="M0 0h30v30H0z" fill="#0b78d4" />
        <path d="M7 8l11-1 2 15-13 2z" fill="#f4f6e8" />
        <path d="M7 19l13-2v5l-13 2z" fill="#5cb531" />
        <ellipse cx="12.500" cy="15" rx="4.500" ry="3.500" fill="#6fc243" />
        <path d="M9 14h7M11 17l4-1" stroke="#333" strokeWidth="1.500" />
        <path d="M22 6l-4 14" stroke="#d8b04a" strokeWidth="2" />
      </svg>
    ),
  },
  {
    name: "LINE",
    state: "open",
    icon: (
      <svg width="30" height="30" viewBox="0 0 30 30">
        <rect width="30" height="30" rx="4" fill="#00b900" />
        <path d="M15 4.500c-6.500 0-11 4-11 9 0 4.500 4 8 9.500 8.800 1 .3 1 1.200.6 3.700 4-2 12-7.500 12-12.500 0-5-4.600-9-11.100-9z" fill="#fff" />
        <text x="15" y="16" fontSize="6.500" fontWeight="bold" fill="#00b900" textAnchor="middle">LINE</text>
      </svg>
    ),
  },
  {
    name: "7-Zip",
    icon: (
      <svg width="30" height="30" viewBox="0 0 30 30">
        <path d="M0 0h30v30H0z" fill="#0b78d4" />
        <path d="M5 10h20v11H5z" fill="#fff" />
        <path d="M5 10h8v10H5z" fill="#000" />
        <text x="7" y="19" fontSize="9" fontWeight="bold" fill="#fff">7</text>
        <text x="13.500" y="19" fontSize="6.500" fontWeight="bold" fill="#000">ZIP</text>
      </svg>
    ),
  },
  {
    name: "小算盤",
    icon: (
      <svg width="30" height="30" viewBox="0 0 30 30">
        <rect x="3" width="24" height="30" rx="2" fill="#737f8b" />
        <path d="M6 3h18v5H6z" fill="#40d3ff" />
        <path d="M6 10h5v4H6zM12.500 10h5v4h-5zM19 10h5v4h-5zM6 16h5v4H6zM12.500 16h5v4h-5zM6 22h5v5H6zM12.500 22h5v5h-5z" fill="#e3e7eb" />
        <path d="M19 16h5v11h-5z" fill="#1d4c8c" />
      </svg>
    ),
  },
  {
    name: "Google Chrome",
    state: "open",
    icon: (
      <svg width="38" height="38" viewBox="0 0 38 38">
        <circle cx="17" cy="21" r="15" fill="#fbc116" />
        <path d="M17 21L4 13.500A15 15 0 0 1 30 13.500H17z" fill="#e33b2e" />
        <path d="M17 21L4 13.500A15 15 0 0 0 16 36l7-12z" fill="#2da94f" />
        <circle cx="17" cy="21" r="7" fill="#fff" />
        <circle cx="17" cy="21" r="5.500" fill="#2f7de1" />
        <circle cx="28" cy="10" r="9.500" fill="#2b2224" />
        <path d="M22 11h12M23 13h10M24 16h7" stroke="#7d5b35" strokeWidth="1.500" strokeDasharray="2 1" />
        <path d="M22 7h4M30 6h4M27 9v3" stroke="#4b5a8c" strokeWidth="1.500" />
      </svg>
    ),
  },
  {
    name: "OBS Studio",
    icon: (
      <svg width="30" height="30" viewBox="0 0 30 30" fill="none">
        <circle cx="15" cy="15" r="12" fill="#262527" stroke="#aaa" />
        <path d="M9 7c0 5 2 7 6 8 4-1 6-3 9-1M15 15c-1 4-4 6-8 5M15 15c4 2 4 6 2 9" stroke="#c9c9c9" strokeWidth="1.700" />
      </svg>
    ),
  },
  {
    name: "NoxPlayer",
    icon: (
      <svg width="30" height="30" viewBox="0 0 30 30">
        <defs>
          <linearGradient id="nox" x1="0" y1="0" x2="1" y2="1">
            <stop offset="0" stopColor="#25d6e8" />
            <stop offset=".5" stopColor="#6a4bff" />
            <stop offset="1" stopColor="#ff4fb1" />
          </linearGradient>
        </defs>
        <path d="M15 1l12.500 7v14L15 29 2.500 22V8z" fill="#15171c" stroke="url(#nox)" strokeWidth="2" strokeLinejoin="round" />
        <path d="M5 18v-3c0-3 5-3 5 0v3M14.500 12.500c3.500 0 3.500 5.500 0 5.500s-3.500-5.500 0-5.500zM19 12.500c3 0 3 5.500 6 5.500M25 12.500c-3 0-3 5.500-6 5.500" fill="none" stroke="#1ec9b8" strokeWidth="1.500" />
      </svg>
    ),
  },
  {
    name: "Disney+",
    icon: (
      <svg width="30" height="30" viewBox="0 0 30 30">
        <defs>
          <linearGradient id="dis" x1="0" y1="0" x2="0" y2="1">
            <stop offset="0" stopColor="#040a2c" />
            <stop offset="1" stopColor="#0d3f7d" />
          </linearGradient>
        </defs>
        <path d="M0 0h30v30H0z" fill="url(#dis)" />
        <path d="M8 10c6-3 14-1 16 5" fill="none" stroke="#5cc3e6" />
        <text x="15" y="19" fontSize="6" fontStyle="italic" fill="#fff" textAnchor="middle">Disney+</text>
      </svg>
    ),
  },
  {
    name: "Android Studio",
    icon: (
      <svg width="30" height="30" viewBox="0 0 30 30">
        <circle cx="15" cy="15" r="13" fill="#fff" />
        <path d="M9 9h6l2-2h3v6H9z" fill="#3ddc84" />
        <path d="M8 10h6l2 2h6v10H8z" fill="#2f7fe0" />
        <path d="M12 22l4-9 3 9M21 13v9M13 19h5" fill="none" stroke="#12304f" strokeWidth="1.700" />
      </svg>
    ),
  },
  {
    name: "封包檢視器",
    icon: (
      <svg width="30" height="30" viewBox="0 0 30 30">
        <path d="M11 1l18 2-1 13-16-2z" fill="#ecc24e" stroke="#222" strokeWidth="1.300" />
        <path d="M11 1l8 8 10-6" fill="none" stroke="#222" strokeWidth="1.200" />
        <circle cx="11" cy="14" r="8" fill="#dcdcdc" stroke="#888" />
        <path d="M11 6a8 8 0 0 1 5 14l-5-2z" fill="#149a2d" />
        <path d="M13 8v10M15 9v9M11 12h7" stroke="#063" />
        <path d="M17 22l6 7" stroke="#222" strokeWidth="3" />
      </svg>
    ),
  },
  {
    name: "Word",
    state: "open",
    icon: (
      <svg width="30" height="30" viewBox="0 0 30 30">
        <path d="M15 5h12v20H15z" fill="#fff" stroke="#2b579a" strokeWidth="1.500" />
        <path d="M17 9h8M17 12h8M17 15h8M17 18h8M17 21h8" stroke="#2b579a" strokeWidth="1.300" />
        <path d="M1 5l16-3v26L1 25z" fill="#2b579a" />
        <text x="9" y="20" fontSize="13" fontWeight="bold" fill="#fff" textAnchor="middle">W</text>
      </svg>
    ),
  },
  {
    name: "Excel",
    state: "active",
    icon: (
      <svg width="30" height="30" viewBox="0 0 30 30">
        <path d="M15 5h13v20H15z" fill="#fff" stroke="#217346" strokeWidth="1.500" />
        <path d="M18 9h3.500M23 9h3.500M18 12h3.500M23 12h3.500M18 15h3.500M23 15h3.500M18 18h3.500M23 18h3.500M18 21h3.500M23 21h3.500" stroke="#217346" strokeWidth="2" />
        <path d="M2 5l16-3v26L2 25z" fill="#217346" />
        <text x="10" y="20" fontSize="14" fontWeight="bold" fill="#fff" textAnchor="middle">X</text>
      </svg>
    ),
  },
];

function Taskbar() {
  return (
    <div className="flex h-[59px] items-center bg-[linear-gradient(90deg,#d9d9d9_30%,#e3d8d9_48%,#e4d8d9_66%,#d9d9d9_71%)] pr-[24px] pl-[14px] text-[#111]">
      {apps.map((a) => (
        <button
          key={a.name}
          aria-label={a.name}
          className="relative flex h-full w-[55px] items-center justify-center pb-[2px]"
        >
          {a.state === "active" && (
            <>
              <span className="absolute top-[5px] left-[6px] h-12 w-[46px] rounded-md bg-[#e9e4e5]" />
              <span className="absolute top-[5px] left-[4px] h-12 w-[44px] rounded-md bg-[#f3eff0]" />
            </>
          )}
          <span className={a.name === "Google Chrome" ? "relative -mt-2 ml-1" : "relative"}>{a.icon}</span>
          {a.state === "open" && <span className="absolute bottom-[6px] h-1 w-2 rounded-full bg-[#7d7d7d]" />}
          {a.state === "active" && <span className="absolute bottom-[6px] h-1 w-5 rounded-full bg-[#0a76d2]" />}
        </button>
      ))}
      <div className="ml-auto flex items-center pb-[2px]">
        <button aria-label="顯示隱藏的圖示" className="mr-[18px]">
          <svg width="17" height="10" viewBox="0 0 17 10" fill="none" stroke="#222" strokeWidth="1.500">
            <path d="M1 9l7.500-8L16 9" />
          </svg>
        </button>
        <button aria-label="輸入法" className="mr-[21px] text-[18px] leading-5 font-bold">中</button>
        <button aria-label="網路、音量與電池" className="flex items-center">
          <svg width="20" height="16" viewBox="0 0 20 16" fill="none" stroke="#222" strokeWidth="1.500">
            <path d="M1 6.500c5-6 13-6 18 0M4 9.500c3.500-4 8.500-4 12 0M6.500 12c2-2.500 5-2.500 7 0" />
            <circle cx="10" cy="14" r="1.200" fill="#222" />
          </svg>
          <svg className="ml-[10px]" width="20" height="16" viewBox="0 0 20 16" fill="none" stroke="#222" strokeWidth="1.300">
            <path d="M1 5.500h3L8.500 1v14L4 10.500H1zM12 5l6 6M18 5l-6 6" />
          </svg>
          <svg className="ml-[10px]" width="21" height="13" viewBox="0 0 21 13" fill="none" stroke="#222" strokeWidth="1.500">
            <rect x="1" y="1" width="16" height="11" rx="2.500" />
            <path d="M3.500 3.500h5v6h-5z" fill="#222" />
            <path d="M19 5v3" strokeWidth="2.500" />
          </svg>
        </button>
        <div className="ml-5 text-right text-[14px] leading-5">
          <div>下午 09:17</div>
          <div>2022/10/3</div>
        </div>
        <button aria-label="通知" className="ml-[11px]">
          <svg width="18" height="19" viewBox="0 0 18 19">
            <path d="M0 15l2-3V8c0-5 3-7 7-7h2v5h4v6l2 3z" fill="#222" />
            <path d="M5.500 16.500h6a3 2.500 0 0 1-6 0z" fill="#222" />
            <path d="M5 6h4L5 11h4.500" fill="none" stroke="#fff" strokeWidth="1.300" />
            <path d="M12 1h4l-4 4h4" fill="none" stroke="#222" strokeWidth="1.500" />
          </svg>
        </button>
      </div>
    </div>
  );
}

export default function App() {
  return (
    <div className="flex h-screen flex-col overflow-hidden bg-[#e6e6e6] font-['Open_Sans','Noto_Sans_CJK_TC',sans-serif]">
      <header className="relative shrink-0 bg-[#217346]">
        <TitleArt />
        <TitleBar />
        <Tabs />
      </header>
      <div className="shrink-0">
        <Ribbon />
        <FormulaBar />
      </div>
      <Sheet />
      <div className="shrink-0">
        <SheetTabs />
        <StatusBar />
        <Taskbar />
      </div>
    </div>
  );
}
